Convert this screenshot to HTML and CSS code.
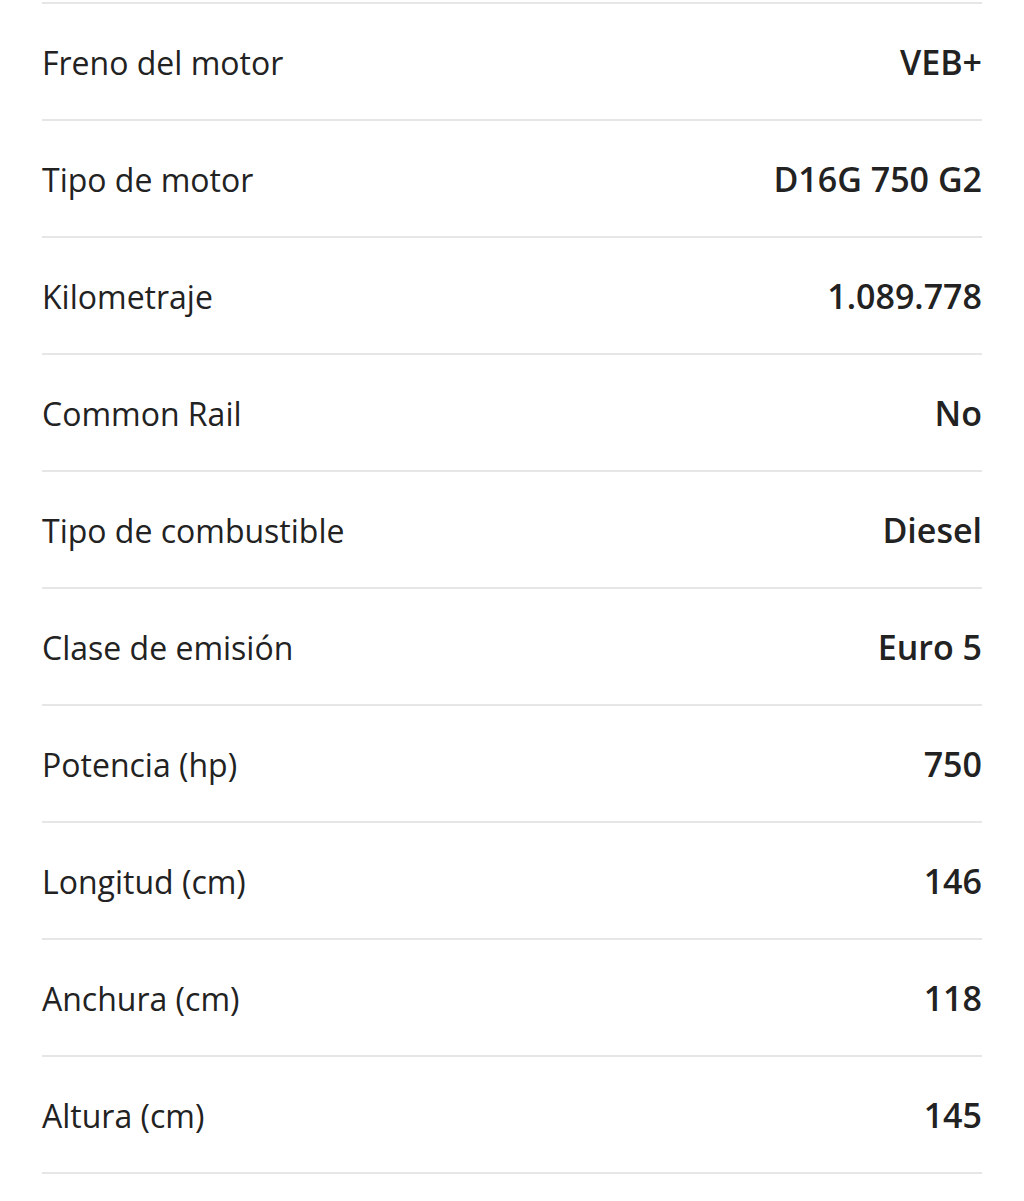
FILE: index.html
```html
<!DOCTYPE html>
<html lang="es">
<head>
<meta charset="UTF-8">
<meta name="viewport" content="width=device-width, initial-scale=1.0">
<title>Especificaciones</title>
<link rel="stylesheet" href="styles.css">
</head>
<body>
<div class="specs">
<div class="spec-row"><span class="spec-label">Freno del motor</span><span class="spec-value">VEB+</span></div>
<div class="spec-row"><span class="spec-label">Tipo de motor</span><span class="spec-value">D16G 750 G2</span></div>
<div class="spec-row"><span class="spec-label">Kilometraje</span><span class="spec-value">1.089.778</span></div>
<div class="spec-row"><span class="spec-label">Common Rail</span><span class="spec-value">No</span></div>
<div class="spec-row"><span class="spec-label">Tipo de combustible</span><span class="spec-value">Diesel</span></div>
<div class="spec-row"><span class="spec-label">Clase de emisión</span><span class="spec-value">Euro 5</span></div>
<div class="spec-row"><span class="spec-label">Potencia (hp)</span><span class="spec-value">750</span></div>
<div class="spec-row"><span class="spec-label">Longitud (cm)</span><span class="spec-value">146</span></div>
<div class="spec-row"><span class="spec-label">Anchura (cm)</span><span class="spec-value">118</span></div>
<div class="spec-row"><span class="spec-label">Altura (cm)</span><span class="spec-value">145</span></div>
</div>
</body>
</html>
```

FILE: styles.css
```css
body {
    font-family: "Open Sans", Arial, sans-serif;
    background-color: #fff;
    color: #222;
    margin: 0;
    padding: 0;
}
.specs {
    margin: 2px 42px 0;
    border-top: 2px solid #e6e6e6;
}
.spec-row {
    display: flex;
    justify-content: space-between;
    align-items: center;
    height: 115px;
    padding-top: 1px;
    box-sizing: border-box;
    height: 117px;
    border-bottom: 2px solid #e6e6e6;
}
.spec-label {
    font-size: 32px;
    font-weight: 400;
}
.spec-value {
    font-size: 34px;
    font-weight: 600;
}
```
